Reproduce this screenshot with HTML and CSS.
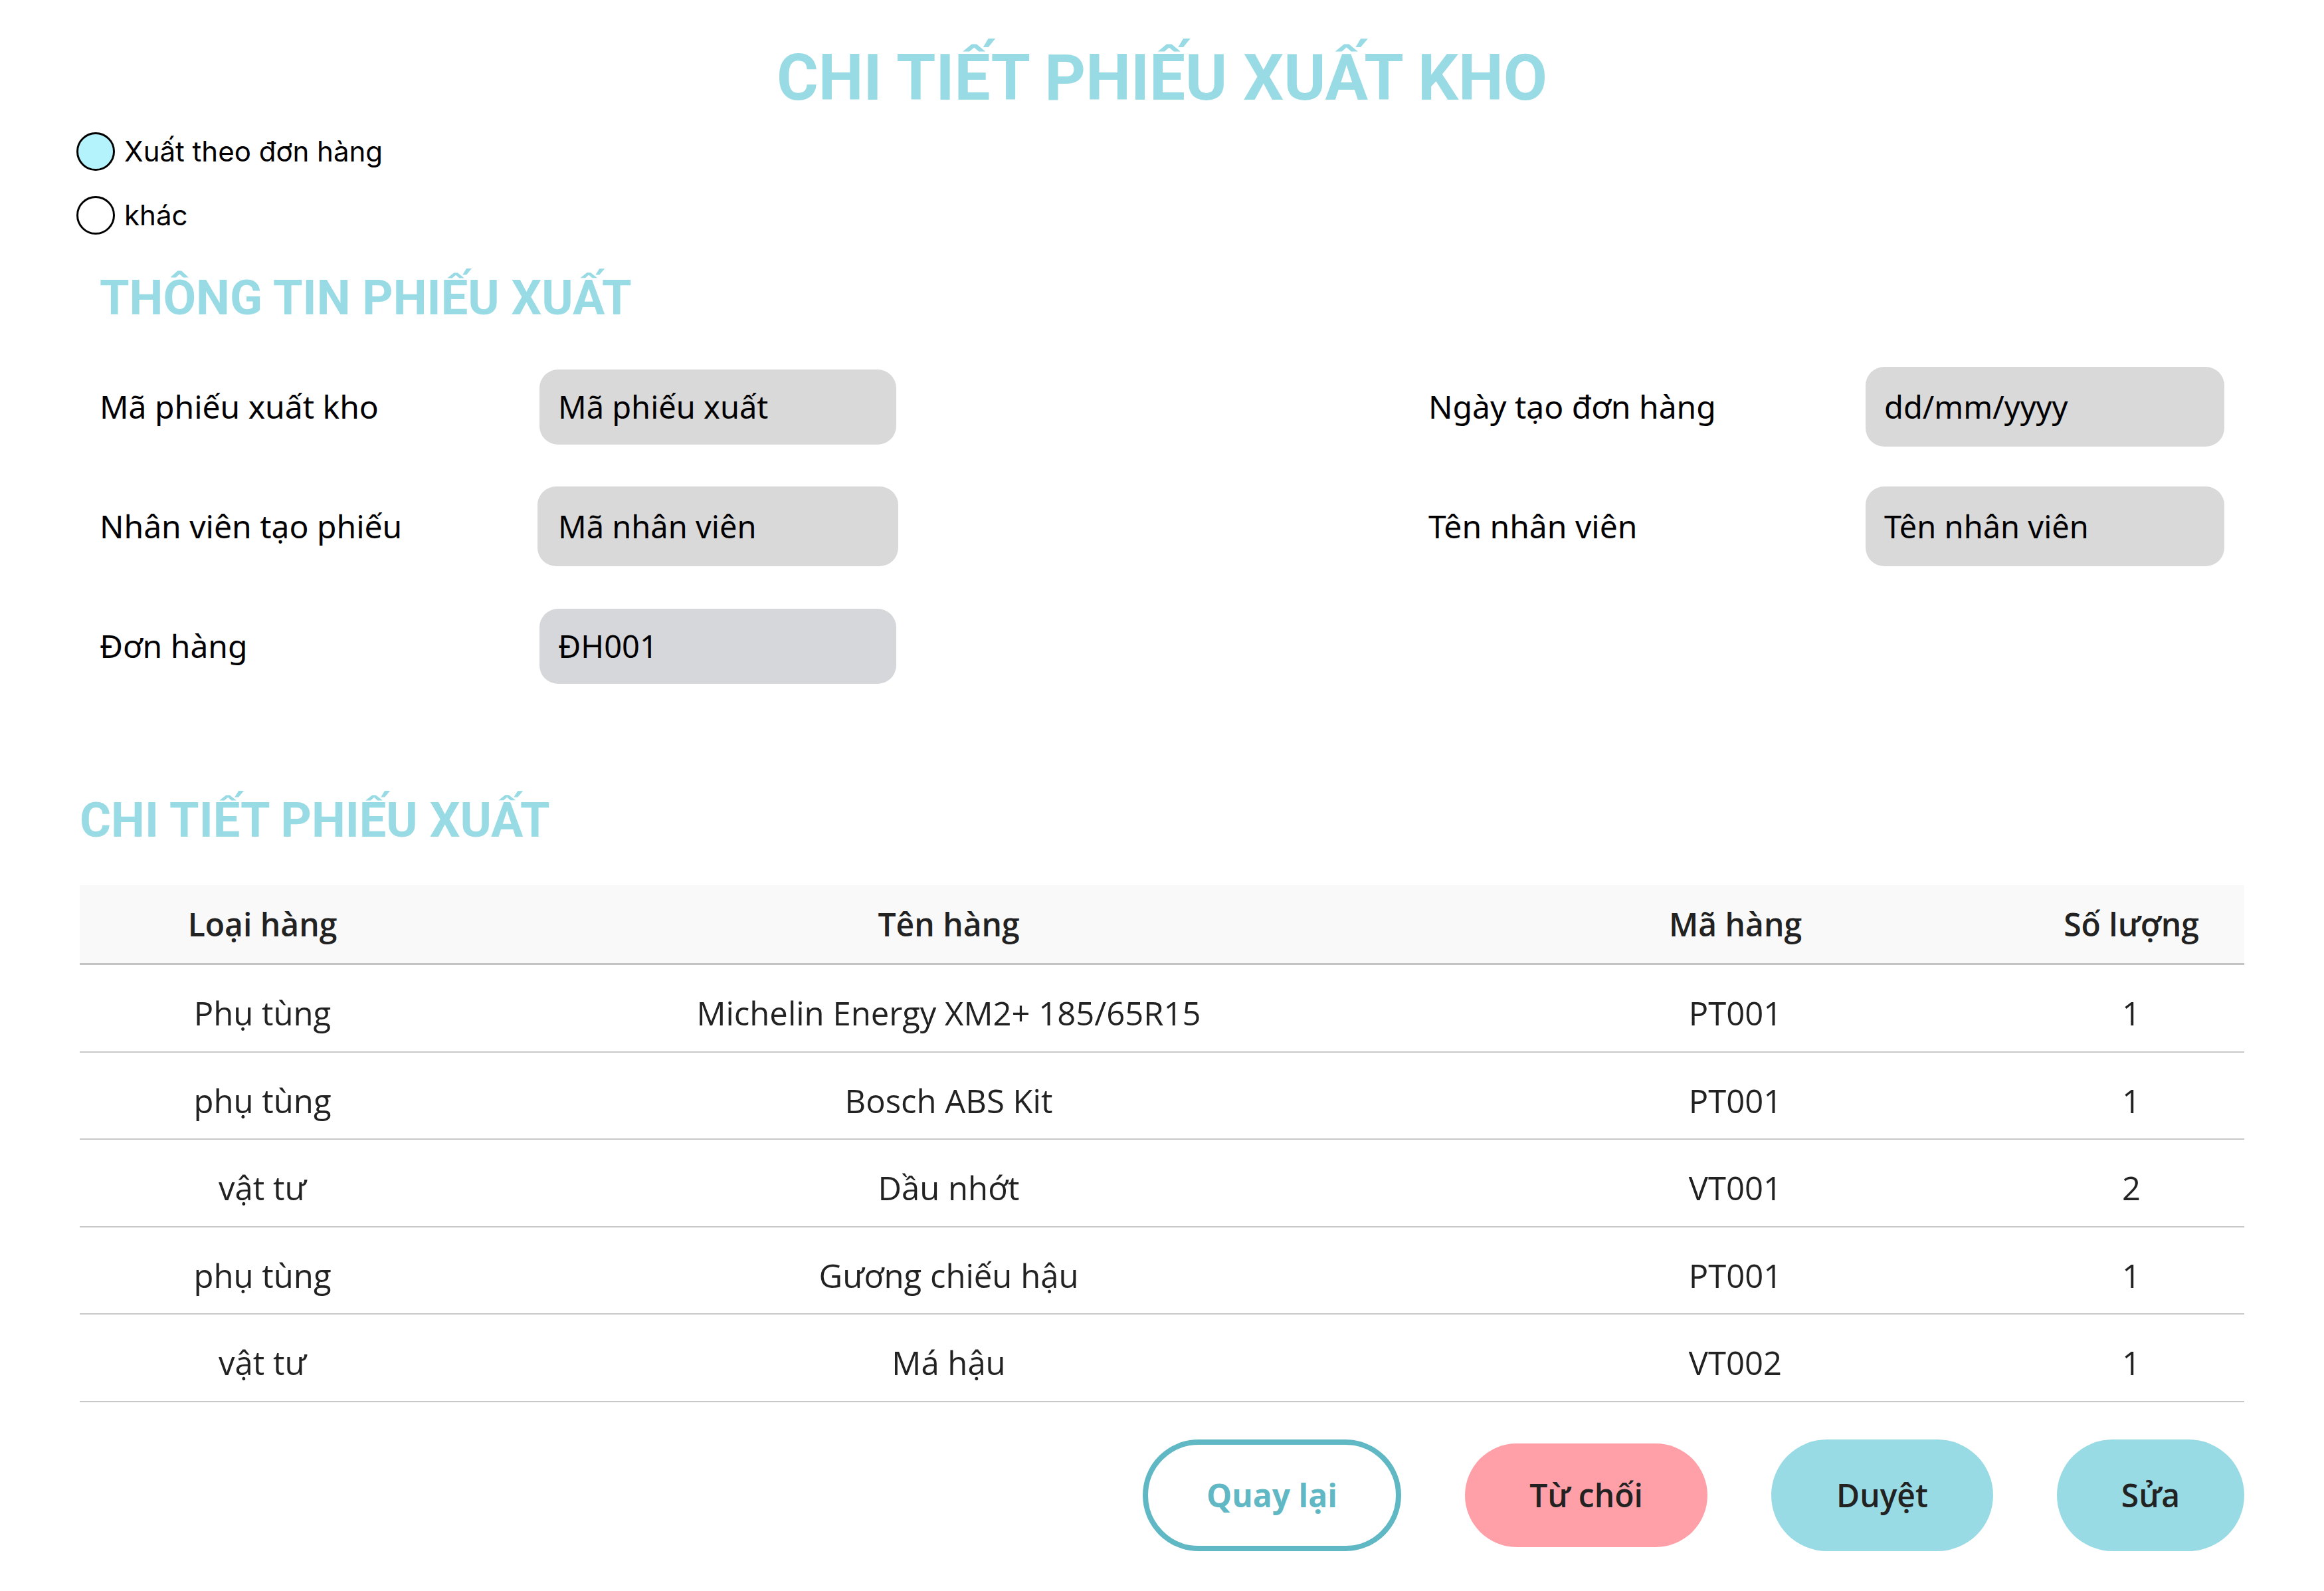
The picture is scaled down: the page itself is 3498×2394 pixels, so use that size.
FILE: index.html
```html
<!DOCTYPE html>
<html lang="vi">
<head>
<meta charset="utf-8">
<title>Chi tiết phiếu xuất kho</title>
<link rel="stylesheet" href="styles.css">
</head>
<body>
<main class="page">
  <h1 class="page-title">CHI TIẾT PHIẾU XUẤT KHO</h1>

  <div class="radios">
    <div class="radio"><span class="radio-dot is-checked"></span><span class="radio-label">Xuất theo đơn hàng</span></div>
    <div class="radio"><span class="radio-dot"></span><span class="radio-label">khác</span></div>
  </div>

  <h2 class="section-title section-info">THÔNG TIN PHIẾU XUẤT</h2>

  <div class="form-grid">
    <div class="label">Mã phiếu xuất kho</div>
    <div class="field">Mã phiếu xuất</div>
    <div class="spacer"></div>
    <div class="label">Ngày tạo đơn hàng</div>
    <div class="field field-lg">dd/mm/yyyy</div>

    <div class="label">Nhân viên tạo phiếu</div>
    <div class="field field-lg field-wide">Mã nhân viên</div>
    <div class="spacer"></div>
    <div class="label">Tên nhân viên</div>
    <div class="field field-lg">Tên nhân viên</div>

    <div class="label">Đơn hàng</div>
    <div class="field field-alt">ĐH001</div>
    <div class="spacer"></div>
    <div class="label"></div>
    <div class="spacer"></div>
  </div>

  <h2 class="section-title section-detail">CHI TIẾT PHIẾU XUẤT</h2>

  <div class="items">
    <div class="items-row items-head">
      <div>Loại hàng</div><div>Tên hàng</div><div>Mã hàng</div><div>Số lượng</div>
    </div>
    <div class="items-row">
      <div>Phụ tùng</div><div>Michelin Energy XM2+ 185/65R15</div><div>PT001</div><div>1</div>
    </div>
    <div class="items-row">
      <div>phụ tùng</div><div>Bosch ABS Kit</div><div>PT001</div><div>1</div>
    </div>
    <div class="items-row">
      <div>vật tư</div><div>Dầu nhớt</div><div>VT001</div><div>2</div>
    </div>
    <div class="items-row">
      <div>phụ tùng</div><div>Gương chiếu hậu</div><div>PT001</div><div>1</div>
    </div>
    <div class="items-row">
      <div>vật tư</div><div>Má hậu</div><div>VT002</div><div>1</div>
    </div>
  </div>

  <div class="actions">
    <button class="btn btn-back">Quay lại</button>
    <button class="btn btn-reject">Từ chối</button>
    <button class="btn btn-approve">Duyệt</button>
    <button class="btn btn-edit">Sửa</button>
  </div>
</main>
</body>
</html>
```

FILE: styles.css
```css
* { box-sizing: border-box; }

html, body {
  margin: 0;
  padding: 0;
  background: #ffffff;
}

body {
  font-family: "Noto Sans", Roboto, sans-serif;
  color: #000;
}

.page {
  width: 3498px;
  padding-bottom: 40px;
}

.page-title {
  margin: 69px 0 0 0;
  font-family: Roboto, sans-serif;
  font-weight: 700;
  font-size: 96px;
  line-height: 1;
  color: #99dbe4;
  text-align: center;
}

.radios {
  margin: 34px 0 0 115px;
  display: flex;
  flex-direction: column;
  gap: 38px;
}

.radio {
  display: flex;
  align-items: center;
  gap: 14px;
  height: 58px;
}

.radio-dot {
  width: 58px;
  height: 58px;
  border-radius: 50%;
  border: 3px solid #000;
  background: #fff;
  flex: none;
}

.radio-dot.is-checked {
  background: #b5f3fc;
}

.radio-label {
  font-family: Inter, sans-serif;
  font-size: 42px;
  font-weight: 400;
  line-height: 1;
  color: #000;
}

.section-title {
  font-family: Roboto, sans-serif;
  font-weight: 700;
  font-size: 72px;
  line-height: 1;
  color: #99dbe4;
  margin: 0;
}

.section-info {
  margin: 60px 0 0 150px;
}

.form-grid {
  margin: 67px 0 0 150px;
  width: 3198px;
  display: grid;
  grid-template-columns: 662px 537px 1fr 658px 540px;
  grid-auto-rows: 120px;
  row-gap: 60px;
  align-items: center;
}

.label {
  font-family: "Noto Sans", sans-serif;
  font-size: 48px;
  line-height: 1;
  color: #000;
}

.field {
  height: 113px;
  border-radius: 28px;
  background: #d9d9d9;
  display: flex;
  align-items: center;
  padding-left: 28px;
  font-family: "Noto Sans", sans-serif;
  font-size: 47px;
  line-height: 1;
  color: #000;
}

.field-lg {
  height: 120px;
}

.field-wide {
  margin: 0 -3px;
  padding-left: 31px;
}

.field-alt {
  background: #d6d7db;
}

.section-detail {
  margin: 167px 0 0 120px;
}

.items {
  margin: 61px 0 0 120px;
  width: 3258px;
  font-family: "Open Sans", sans-serif;
  font-size: 49px;
  color: #222;
}

.items-row {
  display: grid;
  grid-template-columns: 550px 1516px 852px 1fr;
  height: 131.5px;
  padding-top: 16px;
  border-bottom: 2px solid #c8c8c8;
  align-items: center;
  text-align: center;
  line-height: 1;
}

.items-head {
  height: 120px;
  padding-top: 0;
  background: #f9f9f9;
  border-bottom: 3px solid #c4c4c4;
  font-size: 48px;
  font-weight: 600;
}

.actions {
  margin: 56px 120px 0 0;
  display: flex;
  justify-content: flex-end;
  align-items: center;
  gap: 96px;
  height: 168px;
}

.btn {
  border: none;
  border-radius: 999px;
  font-family: "Open Sans", sans-serif;
  font-weight: 600;
  font-size: 48px;
  line-height: 1;
  color: #222;
  padding: 0;
  display: flex;
  align-items: center;
  justify-content: center;
  cursor: pointer;
}

.btn-back {
  width: 389px;
  height: 168px;
  background: #fff;
  border: 8px solid #5fb8c4;
  color: #5fb8c4;
  font-weight: 700;
}

.btn-reject {
  width: 365px;
  height: 156px;
  background: #ffa0a8;
}

.btn-approve {
  width: 334px;
  height: 168px;
  background: #99dbe4;
}

.btn-edit {
  width: 282px;
  height: 168px;
  background: #99dbe4;
}
```
